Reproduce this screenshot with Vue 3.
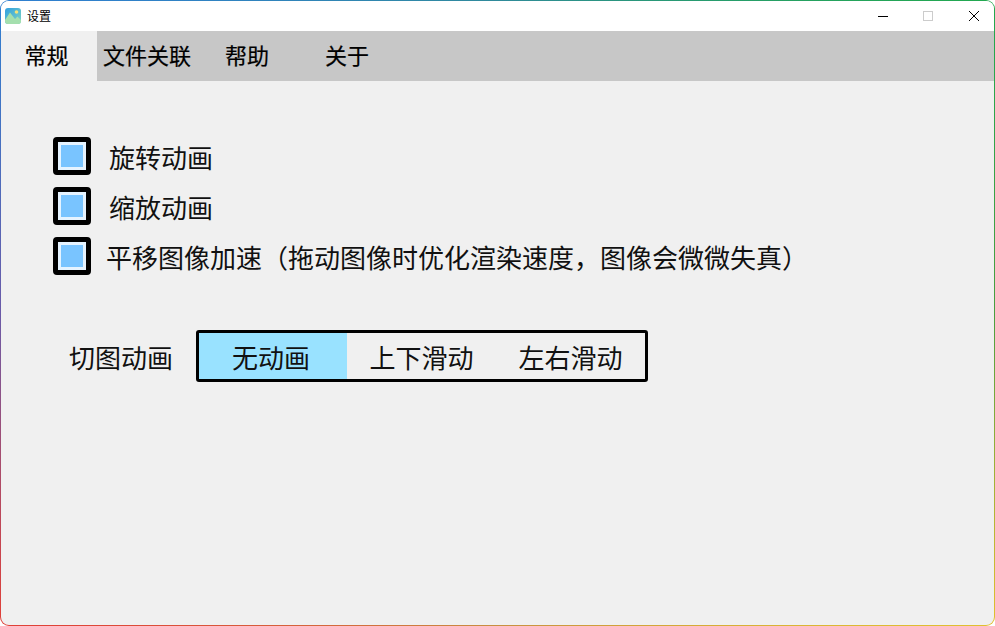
<script setup>
const tabs = ['常规', '文件关联', '帮助', '关于']
const options = [
  { label: '旋转动画', wide: true },
  { label: '缩放动画', wide: true },
  { label: '平移图像加速（拖动图像时优化渲染速度，图像会微微失真）', wide: false }
]
const modes = ['无动画', '上下滑动', '左右滑动']
</script>

<template>
  <div class="frame">
    <div class="window">
      <header class="titlebar">
        <svg class="logo" viewBox="0 0 16 16" aria-hidden="true">
          <defs>
            <linearGradient id="sky" x1="0" y1="0" x2="1" y2="1">
              <stop offset="0" stop-color="#2f9fe0" />
              <stop offset="1" stop-color="#7fd6c4" />
            </linearGradient>
          </defs>
          <rect width="16" height="16" rx="3" fill="url(#sky)" />
          <circle cx="11.5" cy="4" r="1.8" fill="#f4e27a" />
          <path d="M0 12 L5 4.5 L10 11 L12.5 8.5 L16 12 V13 a3 3 0 0 1 -3 3 H3 a3 3 0 0 1 -3 -3 Z" fill="#a4dfae" />
        </svg>
        <span class="title">设置</span>
        <div class="controls">
          <svg class="ctl" viewBox="0 0 10 10" aria-hidden="true"><path d="M0 5.5 H10" stroke="#000" /></svg>
          <svg class="ctl" viewBox="0 0 10 10" aria-hidden="true"><rect x=".5" y=".5" width="9" height="9" fill="none" stroke="#ccc" /></svg>
          <svg class="ctl" viewBox="0 0 10 10" aria-hidden="true"><path d="M0 0 L10 10 M10 0 L0 10" stroke="#000" /></svg>
        </div>
      </header>

      <nav class="tabs">
        <div v-for="(t, i) in tabs" :key="t" class="tab" :class="{ active: i === 0 }">{{ t }}</div>
      </nav>

      <main class="content">
        <div class="options">
          <label v-for="o in options" :key="o.label" class="option">
            <span class="check"><span class="check-fill"></span></span>
            <span class="option-text" :class="{ wide: o.wide }">{{ o.label }}</span>
          </label>
        </div>

        <div class="mode-row">
          <span class="mode-label">切图动画</span>
          <div class="segments">
            <div v-for="(m, i) in modes" :key="m" class="segment" :class="{ on: i === 0 }">{{ m }}</div>
          </div>
        </div>
      </main>
    </div>
  </div>
</template>

<style scoped>
.frame {
  width: 995px;
  height: 626px;
  box-sizing: border-box;
  padding: 1px;
  border-radius: 9px;
  overflow: hidden;
  background: conic-gradient(from 0deg at 50% 50%, #2f8a9a 0deg, #22a84f 58deg, #4a9e40 90deg, #e0c030 122deg, #c89040 180deg, #e04038 238deg, #6a5aa8 270deg, #2f7fd0 302deg, #2f8a9a 360deg);
  font-family: "Noto Sans CJK SC", "Noto Sans", sans-serif;
  color: #000;
}
.window {
  width: 100%;
  height: 100%;
  border-radius: 8px;
  overflow: hidden;
  background: #f0f0f0;
  display: flex;
  flex-direction: column;
}
.titlebar {
  height: 30px;
  flex: none;
  background: #fff;
  display: flex;
  align-items: center;
  padding-left: 4px;
}
.logo {
  width: 16px;
  height: 16px;
  flex: none;
}
.title {
  margin-left: 6px;
  font-size: 12px;
  line-height: 16px;
}
.controls {
  margin-left: auto;
  display: flex;
}
.ctl {
  width: 10px;
  height: 10px;
  margin-right: 35px;
  flex: none;
}
.controls .ctl:nth-child(2) {
  margin-right: 36px;
}
.controls .ctl:last-child {
  margin-right: 15px;
}
.tabs {
  height: 50px;
  flex: none;
  background: #c7c7c7;
  display: flex;
}
.tab {
  width: 100px;
  height: 50px;
  line-height: 46px;
  text-align: center;
  font-size: 22px;
  flex: none;
  -webkit-text-stroke: 0.2px #000;
}
.tab:first-child {
  margin-left: -4px;
  padding-right: 1px;
  box-sizing: border-box;
}
.tab.active {
  background: #f0f0f0;
}
.content {
  flex: 1;
  padding: 50px 0 0 52px;
}
.options {
  display: flex;
  flex-direction: column;
}
.option {
  height: 50px;
  display: flex;
  align-items: center;
}
.check {
  width: 38px;
  height: 38px;
  box-sizing: border-box;
  border: 5px solid #000;
  border-radius: 4px;
  background: #e5f3ff;
  padding: 3px;
  flex: none;
}
.check-fill {
  display: block;
  width: 100%;
  height: 100%;
  background: #79c4ff;
}
.option-text {
  margin-left: 15px;
  font-size: 26px;
  line-height: 36px;
  padding-top: 2px;
  color: #111;
}
.option-text.wide {
  margin-left: 18px;
}
.mode-row {
  margin-top: 49px;
  margin-left: 16px;
  display: flex;
  align-items: center;
}
.mode-label {
  width: 127px;
  font-size: 26px;
  line-height: 36px;
  padding-top: 2px;
  color: #111;
}
.segments {
  display: flex;
  box-sizing: border-box;
  width: 452px;
  height: 52px;
  border: 3px solid #000;
  border-radius: 3px;
}
.segment {
  width: 149px;
  text-align: center;
  line-height: 48px;
  height: 46px;
  font-size: 26px;
  color: #111;
}
.segment:first-child {
  width: 148px;
  box-sizing: border-box;
  padding-right: 4px;
}
.segment.on {
  background: #99e2ff;
}
</style>

<style>
html, body { margin: 0; background: #fff; }
</style>
